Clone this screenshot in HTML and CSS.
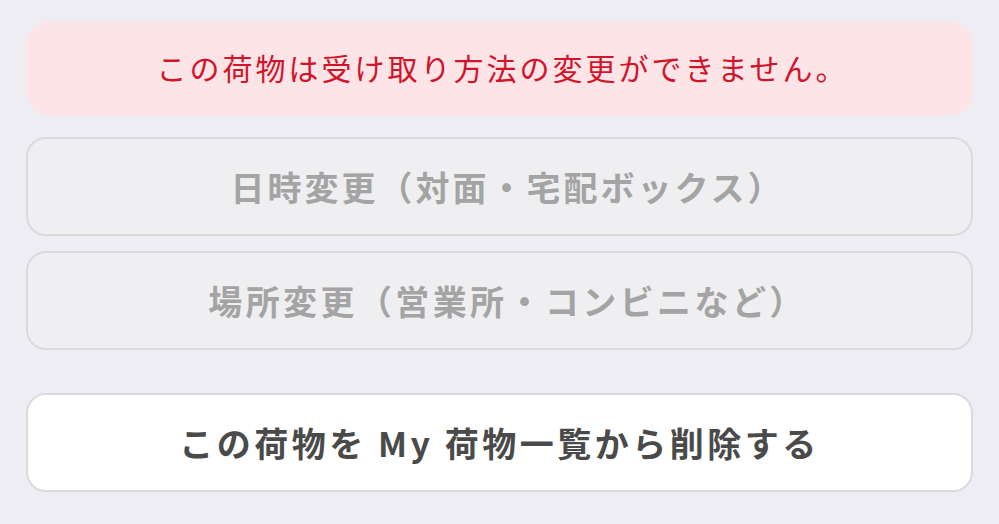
FILE: index.html
```html
<!DOCTYPE html>
<html lang="ja">
<head>
<meta charset="utf-8">
<link rel="stylesheet" href="styles.css">
</head>
<body>
<main class="panel">
  <div class="alert">この荷物は受け取り方法の変更ができません。</div>
  <div class="options">
    <button class="btn btn-disabled" disabled>日時変更（対面・宅配ボックス）</button>
    <button class="btn btn-disabled" disabled>場所変更（営業所・コンビニなど）</button>
  </div>
  <button class="btn btn-delete">この荷物を My 荷物一覧から削除する</button>
</main>
</body>
</html>
```
FILE: styles.css
```css
html, body {
  margin: 0;
  padding: 0;
  background: #eeedf3;
}
body {
  font-family: "Noto Sans CJK JP", "Noto Sans", sans-serif;
}
.panel {
  display: flex;
  flex-direction: column;
  padding: 22px 26px 0 26px;
}
.alert {
  height: 93px;
  box-sizing: border-box;
  padding: 0 0 3px 6px;
  display: flex;
  align-items: center;
  justify-content: center;
  background: #fce4e7;
  border-radius: 22px;
  color: #d2142b;
  font-size: 30px;
  letter-spacing: 3px;
}
.options {
  display: flex;
  flex-direction: column;
  gap: 15px;
  margin-top: 22px;
}
.btn {
  height: 99px;
  box-sizing: border-box;
  width: 100%;
  border: 2px solid #dadadc;
  border-radius: 20px;
  font-family: inherit;
  font-size: 34px;
  font-weight: 700;
  letter-spacing: 3px;
  display: flex;
  align-items: center;
  justify-content: center;
  padding: 0;
}
.btn-disabled {
  background: #efeff1;
  color: #a4a4a4;
  padding-left: 16px;
}
.btn-disabled + .btn-disabled {
  letter-spacing: 3.4px;
}
.btn-delete {
  margin-top: 43px;
  background: #ffffff;
  color: #4a4a4a;
  letter-spacing: 3.5px;
}
```
